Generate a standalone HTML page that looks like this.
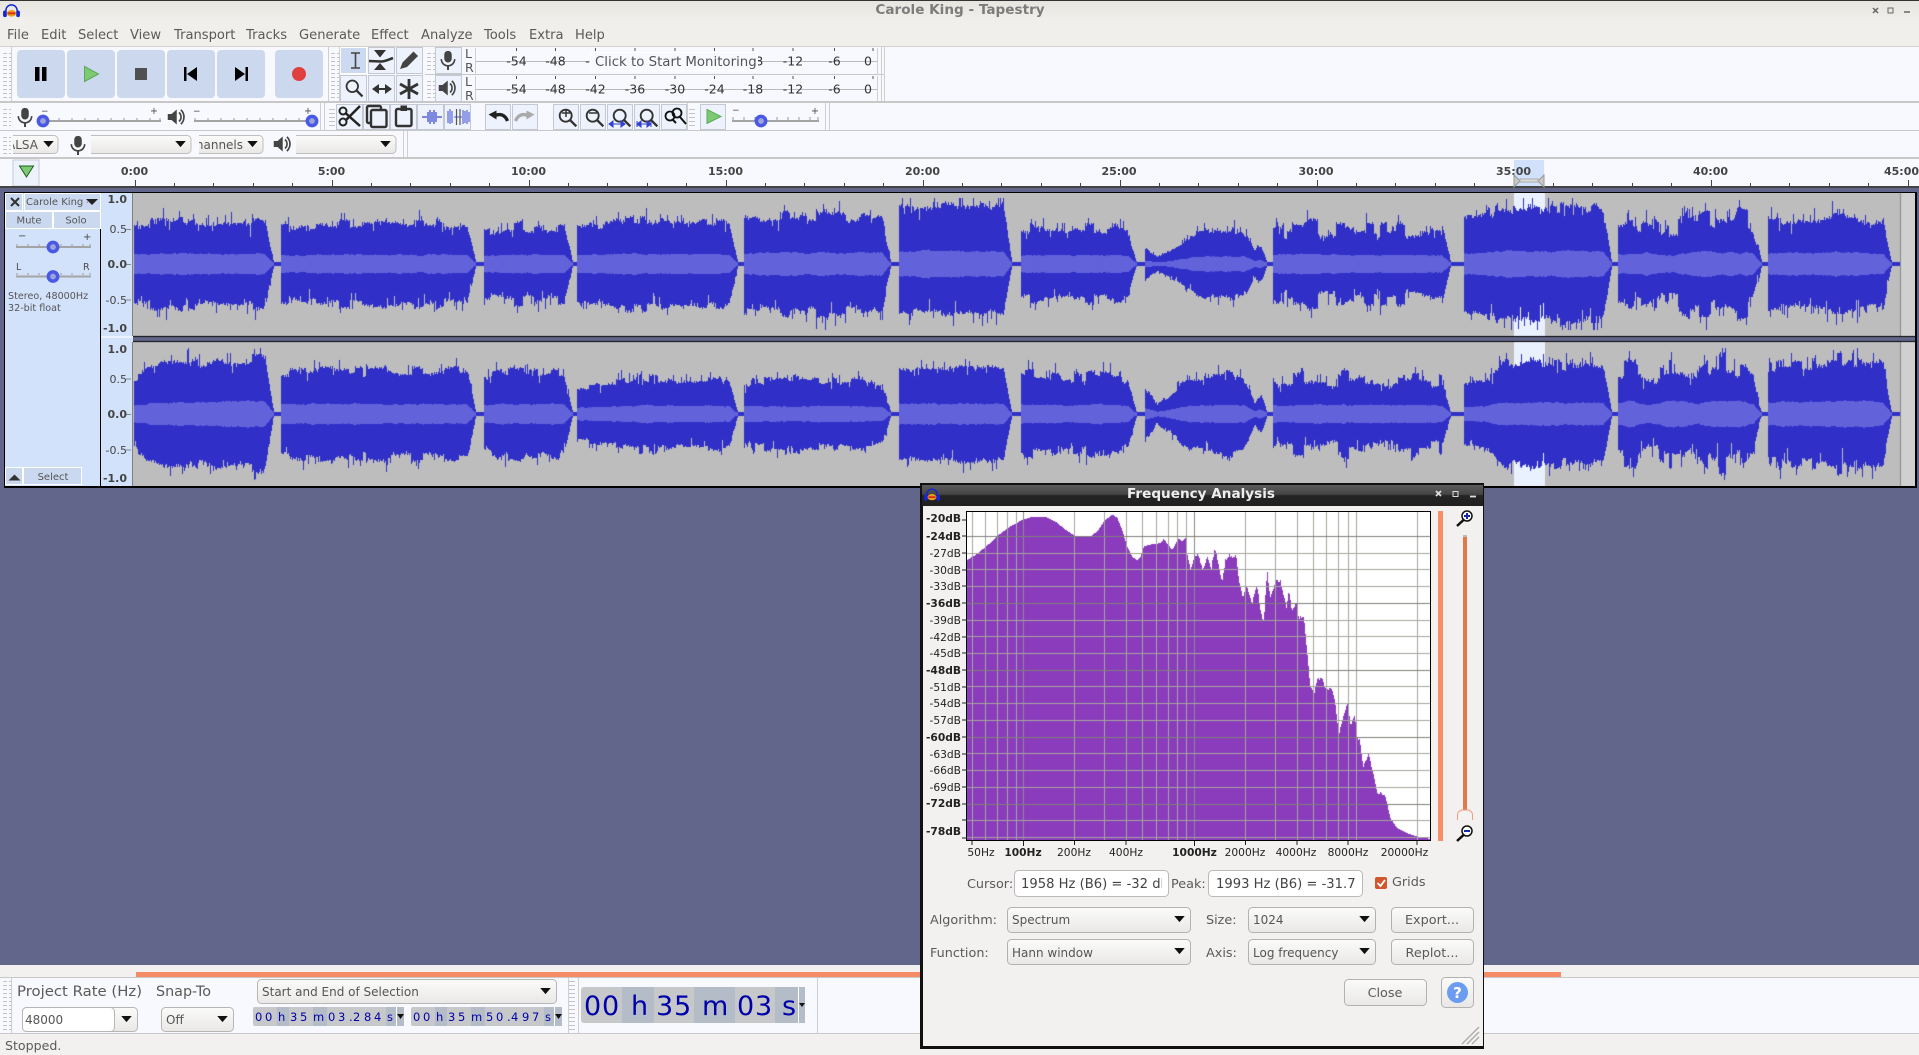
<!DOCTYPE html>
<html lang="en"><head><meta charset="utf-8"><title>Carole King - Tapestry</title>
<style>
html,body{margin:0;padding:0;width:1919px;height:1055px;overflow:hidden;background:#62668a}
canvas,svg.m{position:absolute;display:block}
text{font-family:"DejaVu Sans","Liberation Sans",sans-serif;fill:#4a4a4a;font-size:13.33px}
.g{fill:#5c5a58}.b{font-weight:bold}.r{text-anchor:end}.c{text-anchor:middle}
.ru{font-size:11px;font-weight:bold;fill:#444}
.vr{font-size:11px;text-anchor:end;fill:#444}
.db{font-size:10.67px;text-anchor:end;fill:#222}
.hz{font-size:10.67px;text-anchor:middle;fill:#222}
.me{font-size:12.5px;text-anchor:middle;fill:#333}
.tk{font-size:10px;fill:#555}
.co{font-size:12px;fill:#555}
.bl{fill:#0000a8}
</style></head><body>
<canvas id="w" width="1782" height="294" style="left:133px;top:193px;z-index:1"></canvas>
<svg class="m" width="1919" height="1055" viewBox="0 0 1919 1055" style="left:0;top:0;z-index:2">
<defs>
<linearGradient id="tb" x1="0" y1="0" x2="0" y2="1"><stop offset="0" stop-color="#e6e4df"/><stop offset="1" stop-color="#f1efeb"/></linearGradient>
<linearGradient id="dt" x1="0" y1="0" x2="0" y2="1"><stop offset="0" stop-color="#5c5c5c"/><stop offset=".45" stop-color="#444"/><stop offset=".5" stop-color="#242424"/><stop offset="1" stop-color="#202020"/></linearGradient>
<linearGradient id="bt" x1="0" y1="0" x2="0" y2="1"><stop offset="0" stop-color="#fbfbfa"/><stop offset="1" stop-color="#e9e8e6"/></linearGradient>
<pattern id="gr" width="8" height="4" patternUnits="userSpaceOnUse"><rect x="1" y="1" width="6" height="1" fill="#c4c4c4"/></pattern>
<symbol id="ar" viewBox="0 0 12 8" overflow="visible"><path d="M0 0H12L6 7Z" fill="#111"/></symbol>
<symbol id="mic" viewBox="0 0 24 24"><rect x="7.5" y="1" width="9" height="14" rx="4.5" fill="#444"/><path d="M4 11a8 8 0 0 0 16 0" fill="none" stroke="#444" stroke-width="2"/><path d="M12 19v5" stroke="#444" stroke-width="2.4"/></symbol>
<symbol id="spk" viewBox="0 0 24 24"><path d="M1 8h5l7-6v20l-7-6H1Z" fill="#444"/><path d="M16 6a8 8 0 0 1 0 12M18.500 2.500a13 13 0 0 1 0 19" fill="none" stroke="#444" stroke-width="2.200"/></symbol>
<symbol id="logo" viewBox="0 0 18 16"><path d="M3 10V8a6 6 0 0 1 12 0v2" fill="none" stroke="#1226d8" stroke-width="1.600"/><rect x="0" y="8" width="4" height="7" rx="2" fill="#1226d8"/><rect x="14" y="8" width="4" height="7" rx="2" fill="#1226d8"/><ellipse cx="9" cy="11" rx="5" ry="3.500" fill="#e8a020"/><path d="M5 11h8" stroke="#e02a10" stroke-width="2"/></symbol>
<symbol id="zm" viewBox="0 0 26 26"><circle cx="10.500" cy="10.500" r="6.500" fill="none" stroke="#333" stroke-width="2"/><path d="M15.500 15.500L22 22" stroke="#333" stroke-width="2.600"/></symbol>
<symbol id="kn" viewBox="0 0 12 12"><circle cx="6" cy="6" r="4" fill="#9ea4d8" stroke="#4a58e6" stroke-width="3"/></symbol>
</defs>

<!-- title bar and menu -->
<rect x="0" y="0" width="1919" height="46" fill="#f1efeb"/>
<rect x="0" y="0" width="1919" height="20" fill="url(#tb)"/>
<rect x="0" y="0" width="1919" height="1" fill="#333"/>
<use href="#logo" x="3" y="3" width="17" height="15"/>
<text x="960" y="14" class="b c" style="font-size:13.6px;fill:#7c7c7c">Carole King - Tapestry</text>
<path d="M1873 8l5 5m0-5l-5 5" stroke="#666" stroke-width="1.500"/><rect x="1888" y="8" width="5" height="5" fill="none" stroke="#666"/><path d="M1904 12h6" stroke="#666" stroke-width="1.500"/>
<g>
<text class="g" style="font-size:13.1px" x="7" y="39">File</text><text class="g" style="font-size:13.1px" x="41" y="39">Edit</text><text class="g" style="font-size:13.1px" x="78" y="39">Select</text><text class="g" style="font-size:13.1px" x="130" y="39">View</text><text class="g" style="font-size:13.1px" x="174" y="39">Transport</text><text class="g" style="font-size:13.1px" x="246" y="39">Tracks</text><text class="g" style="font-size:13.1px" x="299" y="39">Generate</text><text class="g" style="font-size:13.1px" x="371" y="39">Effect</text><text class="g" style="font-size:13.1px" x="421" y="39">Analyze</text><text class="g" style="font-size:13.1px" x="484" y="39">Tools</text><text class="g" style="font-size:13.1px" x="529" y="39">Extra</text><text class="g" style="font-size:13.1px" x="575" y="39">Help</text>
</g>

<!-- toolbars -->
<rect x="0" y="46" width="1919" height="112" fill="#f8f9ff"/>
<rect x="0" y="46" width="1919" height="1" fill="#d4d2ce"/>
<rect x="0" y="101" width="1919" height="2" fill="#c8c8c8"/>
<rect x="0" y="130" width="1919" height="1" fill="#c8c8c8"/>
<rect x="0" y="157" width="1919" height="2" fill="#c8c8c8"/>
<rect x="425" y="74" width="460" height="1" fill="#c8c8c8"/>
<g fill="url(#gr)"><rect x="3" y="50" width="8" height="48"/><rect x="331" y="50" width="8" height="48"/><rect x="427" y="50" width="8" height="20"/><rect x="427" y="78" width="8" height="20"/><rect x="3" y="106" width="8" height="22"/><rect x="327" y="106" width="8" height="22"/><rect x="689" y="106" width="8" height="22"/><rect x="3" y="134" width="8" height="22"/></g>
<g fill="#cfcfcf"><rect x="11" y="47" width="1" height="54"/><rect x="328" y="47" width="1" height="54"/><rect x="339" y="47" width="1" height="54"/><rect x="320" y="103" width="1" height="27"/><rect x="324" y="103" width="1" height="27"/><rect x="403" y="131" width="1" height="26"/><rect x="407" y="131" width="1" height="26"/><rect x="881" y="47" width="1" height="54"/><rect x="884" y="47" width="1" height="54"/><rect x="825" y="103" width="1" height="27"/><rect x="829" y="103" width="1" height="27"/><rect x="687" y="103" width="1" height="27"/></g>

<g fill="#cbd8ee"><rect x="17" y="50" width="48" height="48" rx="4"/><rect x="67" y="50" width="48" height="48" rx="4"/><rect x="117" y="50" width="48" height="48" rx="4"/><rect x="167" y="50" width="48" height="48" rx="4"/><rect x="217" y="50" width="48" height="48" rx="4"/><rect x="275" y="50" width="48" height="48" rx="4"/></g>
<rect x="35" y="67" width="4.500" height="14" fill="#000"/><rect x="42" y="67" width="4.500" height="14" fill="#000"/>
<path d="M84.500 66.500L98.500 74L84.500 81.500Z" fill="#7ccb74" stroke="#5ca858"/>
<rect x="135" y="68" width="12" height="12" fill="#505050"/>
<path d="M184 67h2.500v14H184ZM197 67v14l-10-7Z" fill="#000"/>
<path d="M245.500 67h2.500v14h-2.500ZM235 67v14l10-7Z" fill="#000"/>
<circle cx="299" cy="74" r="7" fill="#e04040"/>

<!-- tools -->
<g fill="#eef2fc" stroke="#c4c8d2"><rect x="368.500" y="47.500" width="26" height="26"/><rect x="396.500" y="47.500" width="26" height="26"/><rect x="340.500" y="75.500" width="26" height="26"/><rect x="368.500" y="75.500" width="26" height="26"/><rect x="396.500" y="75.500" width="26" height="26"/><rect x="435.500" y="47.500" width="26" height="26"/><rect x="435.500" y="75.500" width="26" height="26"/></g>
<rect x="340.500" y="47.500" width="26" height="26" fill="#ccdaf1" stroke="#fff"/>
<path d="M351 53h9M351 68h9M355.500 53v15" stroke="#444" stroke-width="1.600" fill="none"/>
<path d="M374 50h12l-6 7.500ZM374 70h12l-6-7Z" fill="#333"/><path d="M369 61l12 .5c4 0 8-2 12-3.500" stroke="#333" stroke-width="2.600" fill="none"/>
<path d="M400 69l2.500-6.500 11-11 4.500 4.500-11 11Z" fill="#444"/>
<use href="#zm" x="343" y="77" width="23" height="23"/>
<path d="M374 89h16" stroke="#333" stroke-width="2"/><path d="M379 84l-7 5 7 5ZM385 84l7 5-7 5Z" fill="#333"/>
<path d="M409 79v20M400 84l18 10M418 84l-18 10" stroke="#333" stroke-width="2.800"/>
<use href="#mic" x="438" y="50" width="20" height="20"/>
<use href="#spk" x="438" y="79" width="18" height="18"/>
<text x="465" y="58" style="font-size:12.500px;fill:#555">L</text><text x="465" y="72" style="font-size:12.500px;fill:#555">R</text>
<text x="465" y="86" style="font-size:12.500px;fill:#555">L</text><text x="465" y="100" style="font-size:12.500px;fill:#555">R</text>

<!-- meters -->
<path d="M475.500 48v26M877.500 48v26M475.500 76v25M877.500 76v25" stroke="#d0d0d0"/>
<path d="M476 61.500h401M476 89.500h401" stroke="#bbb"/>
<path d="M516.500 48v3M555.500 48v3M595.500 48v3M635 48v3M675 48v3M714.500 48v3M753 48v3M793 48v3M834.500 48v3M873 48v3M516.500 76v3M555.500 76v3M595.500 76v3M635 76v3M675 76v3M714.500 76v3M753 76v3M793 76v3M834.500 76v3M873 76v3" stroke="#555"/>
<g><text class="me" x="516.500" y="65.500">-54</text><text class="me" x="555.500" y="65.500">-48</text><text class="me" x="595.500" y="65.500">-42</text><text class="me" x="753" y="65.500">-18</text><text class="me" x="793" y="65.500">-12</text><text class="me" x="834.500" y="65.500">-6</text><text class="me" x="868" y="65.500">0</text>
<text class="me" x="516.500" y="93.500">-54</text><text class="me" x="555.500" y="93.500">-48</text><text class="me" x="595.500" y="93.500">-42</text><text class="me" x="635" y="93.500">-36</text><text class="me" x="675" y="93.500">-30</text><text class="me" x="714.500" y="93.500">-24</text><text class="me" x="753" y="93.500">-18</text><text class="me" x="793" y="93.500">-12</text><text class="me" x="834.500" y="93.500">-6</text><text class="me" x="868" y="93.500">0</text></g>
<rect x="590.500" y="52.500" width="167" height="18" fill="#f8f9ff" stroke="#fff"/>
<text x="595" y="66" style="font-size:13.33px;fill:#555">Click to Start Monitoring</text>

<!-- row 2 -->
<use href="#mic" x="15" y="107" width="20" height="20"/>
<text x="41" y="114" style="font-size:9px">−</text><text x="150" y="114" style="font-size:9.500px">+</text>
<rect x="40" y="120" width="121" height="2" fill="#a4a4a4"/><path d="M46 118v2M59 118v2M72 118v2M85 118v2M98 118v2M111 118v2M124 118v2M137 118v2M150 118v2M160 118v2M195 118v2M208 118v2M221 118v2M234 118v2M247 118v2M260 118v2M273 118v2M286 118v2M299 118v2M314 118v2" stroke="#999"/>
<use href="#kn" x="36" y="114" width="14" height="14"/>
<use href="#spk" x="167" y="108" width="18" height="18"/>
<text x="193" y="114" style="font-size:9px">−</text><text x="304" y="114" style="font-size:9.500px">+</text>
<rect x="194" y="120" width="121" height="2" fill="#a4a4a4"/><use href="#kn" x="305" y="114" width="14" height="14"/>

<g fill="#eef2fc" stroke="#c4c8d2"><rect x="336.500" y="104.500" width="26" height="25"/><rect x="363.500" y="104.500" width="26" height="25"/><rect x="390.500" y="104.500" width="26" height="25"/><rect x="417.500" y="104.500" width="26" height="25"/><rect x="444.500" y="104.500" width="26" height="25"/><rect x="485.500" y="104.500" width="25" height="25"/><rect x="512.500" y="104.500" width="25" height="25"/><rect x="553.500" y="104.500" width="25" height="25"/><rect x="580.500" y="104.500" width="25" height="25"/><rect x="607.500" y="104.500" width="25" height="25"/><rect x="634.500" y="104.500" width="25" height="25"/><rect x="661.500" y="104.500" width="25" height="25"/><rect x="700.500" y="104.500" width="25" height="25"/></g>
<path d="M346 113.500L360 126M346 120L360 106" stroke="#222" stroke-width="2.500"/><circle cx="343" cy="111" r="3.500" fill="#eef2fc" stroke="#222" stroke-width="2"/><circle cx="343" cy="122" r="3.500" fill="#eef2fc" stroke="#222" stroke-width="2"/>
<rect x="367" y="106" width="14" height="17" rx="1.500" fill="none" stroke="#333" stroke-width="2.400"/><rect x="371" y="110" width="15.500" height="17" rx="1.500" fill="#eef2fc" stroke="#333" stroke-width="2.400"/>
<rect x="396" y="109" width="15.500" height="17" rx="1.500" fill="none" stroke="#333" stroke-width="2.400"/><rect x="400.500" y="105.500" width="6.500" height="5.500" fill="#333"/>
<path d="M422 117h5M437 117h5M428 112v10M430 110v14M432 112v10M434 110v14M436 112v10" stroke="#3344cc" stroke-width="1.200"/>
<path d="M448 111v12M450 109v15M452 111v12M454 117h8M463 110v14M465 111v12M467 110v14M469 112v10" stroke="#4a5ad6" stroke-width="1.100"/><path d="M456.500 109v16M460 109v16" stroke="#555" stroke-width="1.200"/>
<path d="M488.500 114.500l8-4v9Z" fill="#222"/><path d="M495 115.500c5-2 10-1 12.500 5.500" fill="none" stroke="#222" stroke-width="3.400"/>
<path d="M534.500 114.500l-8-4v9Z" fill="#aaa"/><path d="M528 115.500c-5-2-10-1-12.500 5.500" fill="none" stroke="#aaa" stroke-width="3.400"/>
<use href="#zm" x="556" y="106" width="24" height="24"/><path d="M562 113h8M566 109v8" stroke="#333" stroke-width="1.500"/>
<use href="#zm" x="583" y="106" width="24" height="24"/><path d="M589 113h8" stroke="#333" stroke-width="1.500"/>
<use href="#zm" x="610" y="106" width="24" height="24"/><path d="M610 124h14M613 121l-4 3 4 3ZM621 121l4 3-4 3Z" stroke="#3340d0" fill="#3340d0"/>
<use href="#zm" x="637" y="106" width="24" height="24"/><path d="M637 124h14M637 121v6M651 121v6M637 124l4-3v6ZM651 124l-4-3v6Z" stroke="#3340d0" fill="#3340d0"/>
<circle cx="670" cy="116" r="4.500" fill="none" stroke="#111" stroke-width="1.800"/><circle cx="677" cy="113" r="4.500" fill="none" stroke="#111" stroke-width="1.800"/><path d="M673 120l3 3M680 117l6 7" stroke="#111" stroke-width="2"/>
<path d="M707 109.500l14 7-14 7Z" fill="#7ccb74" stroke="#5ca858"/>
<text x="732" y="113" style="font-size:9px">−</text><text x="811" y="114" style="font-size:9.500px">+</text>
<rect x="732" y="120" width="87" height="2" fill="#a4a4a4"/><path d="M733 117v3M744 117v3M755 117v3M766 117v3M777 117v3M788 117v3M799 117v3M810 117v3M818 117v3" stroke="#999"/>
<use href="#kn" x="754" y="114" width="14" height="14"/>

<!-- row 3 -->
<path d="M13 135.500h41a4 4 0 0 1 4 4v10a4 4 0 0 1-4 4H13" fill="url(#bt)" stroke="#c0bebc"/>
<svg x="13" y="135" width="30" height="19"><text x="-6" y="14" class="co">ALSA</text></svg>
<use href="#ar" x="43" y="141" width="11" height="7"/>
<use href="#mic" x="68" y="135" width="20" height="20"/>
<path d="M91 135.500h96a4 4 0 0 1 4 4v10a4 4 0 0 1-4 4H91" fill="url(#bt)" stroke="#c0bebc"/>
<use href="#ar" x="175" y="141" width="11" height="7"/>
<path d="M199 135.500h60a4 4 0 0 1 4 4v10a4 4 0 0 1-4 4H199" fill="url(#bt)" stroke="#c0bebc"/>
<svg x="199" y="135" width="46" height="19"><text x="-11.500" y="14" class="co">Channels</text></svg>
<use href="#ar" x="247" y="141" width="11" height="7"/>
<use href="#spk" x="273" y="135" width="18" height="18"/>
<path d="M296 135.500h96a4 4 0 0 1 4 4v10a4 4 0 0 1-4 4H296" fill="url(#bt)" stroke="#c0bebc"/>
<use href="#ar" x="380" y="141" width="11" height="7"/>

<!-- ruler -->
<rect x="0" y="159" width="1919" height="27" fill="#f8f9ff"/>
<rect x="1514" y="160" width="30" height="26" fill="#d2e1fb"/>
<rect x="13" y="160" width="26" height="26" fill="#eef2fc" stroke="#c6c9d2"/>
<path d="M19.500 166h14l-7 11Z" fill="#7ccb74" stroke="#1c5c1c"/>
<rect x="0" y="186" width="1919" height="2" fill="#444"/>
<g id="rt"></g>
<g class="ru"><text class="ru c" x="134.500" y="175">0:00</text><text class="ru c" x="331.500" y="175">5:00</text><text class="ru c" x="528.500" y="175">10:00</text><text class="ru c" x="725.500" y="175">15:00</text><text class="ru c" x="922.500" y="175">20:00</text><text class="ru c" x="1119" y="175">25:00</text><text class="ru c" x="1316" y="175">30:00</text><text class="ru c" x="1513.500" y="175">35:00</text><text class="ru c" x="1710.500" y="175">40:00</text><text class="ru c" x="1901.500" y="175">45:00</text></g>
<path d="M1514 175v12l6-6ZM1544 175v12l-6-6Z" fill="#c8c8c8" stroke="#999"/><path d="M1520 179h18v3h-18Z" fill="#ddd" stroke="#aaa"/>

<!-- track panel -->
<rect x="4" y="192" width="129" height="296" fill="#000"/>
<rect x="5" y="193" width="95" height="293" fill="#d3e2fb"/>
<rect x="101" y="193" width="31" height="143" fill="#d3e2fb"/>
<rect x="101" y="342" width="31" height="144" fill="#d3e2fb"/>
<rect x="101" y="336" width="32" height="2" fill="#eaf1ff"/><rect x="101" y="338" width="32" height="4" fill="#d3e2fb"/>
<rect x="132" y="193" width="1" height="143" fill="#808080"/><rect x="132" y="342" width="1" height="144" fill="#808080"/>
<path d="M126 229.500h5M126 264.500h5M126 300h5M126 379h5M126 414.500h5M126 450h5" stroke="#888"/>
<g fill="#cbd9f0" stroke="#fff"><rect x="5.500" y="193.500" width="17" height="17"/><rect x="24.500" y="193.500" width="76" height="17"/><rect x="5.500" y="211.500" width="47" height="17"/><rect x="53.500" y="211.500" width="47" height="17"/><rect x="5.500" y="467.500" width="17" height="17"/><rect x="23.500" y="467.500" width="58" height="17"/></g>
<path d="M11 198l8 8m0-8l-8 8" stroke="#333" stroke-width="2"/>
<svg x="26" y="193" width="62" height="17"><text class="tk" x="0" y="12">Carole King - Tapestry</text></svg>
<path d="M86 199h12l-6 6Z" fill="#222"/>
<text class="tk c" x="29" y="223.500">Mute</text><text class="tk c" x="76" y="223.500">Solo</text>
<text x="18" y="239" style="font-size:10px">−</text><text x="83" y="240" style="font-size:10px">+</text>
<text x="16" y="270" style="font-size:9.500px">L</text><text x="83" y="270" style="font-size:9.500px">R</text>
<rect x="16" y="246" width="75" height="2" fill="#a4a4a4"/><rect x="16" y="275.500" width="75" height="2" fill="#a4a4a4"/>
<path d="M17 244v2M28 244v2M39 244v2M61 244v2M72 244v2M83 244v2M90 244v2M17 273v2M28 273v2M39 273v2M61 273v2M72 273v2M83 273v2M90 273v2" stroke="#999"/>
<use href="#kn" x="46" y="240" width="14" height="14"/><use href="#kn" x="46" y="269.500" width="14" height="14"/>
<text x="8" y="299" style="font-size:9.600px;fill:#555">Stereo, 48000Hz</text><text x="8" y="311" style="font-size:9.600px;fill:#555">32-bit float</text>
<path d="M8.500 480.500l6-6 6 6Z" fill="#333"/>
<text class="tk c" x="53" y="480">Select</text>
<g><text class="vr b" x="127" y="203">1.0</text><text class="vr" x="127" y="233">0.5</text><text class="vr b" x="127" y="268">0.0</text><text class="vr" x="127" y="304">-0.5</text><text class="vr b" x="127" y="332">-1.0</text>
<text class="vr b" x="127" y="353">1.0</text><text class="vr" x="127" y="383">0.5</text><text class="vr b" x="127" y="418">0.0</text><text class="vr" x="127" y="454">-0.5</text><text class="vr b" x="127" y="482">-1.0</text></g>
<rect x="1915" y="192" width="2" height="296" fill="#000"/><rect x="133" y="192" width="1784" height="1" fill="#000"/><rect x="133" y="486" width="1784" height="2" fill="#000"/>

<!-- bottom -->
<rect x="0" y="965" width="1919" height="12" fill="#f2f1ef"/>
<rect x="136" y="972" width="1425" height="5" fill="#f68c66"/>
<rect x="0" y="977" width="1919" height="56" fill="#f8f9ff"/>
<rect x="0" y="977" width="1919" height="1" fill="#c8c8c8"/><rect x="0" y="1033" width="1919" height="1" fill="#c8c8c8"/>
<rect x="0" y="1034" width="1919" height="21" fill="#f2f1ef"/>
<rect x="3" y="980" width="8" height="50" fill="url(#gr)"/><rect x="11" y="978" width="1" height="55" fill="#cfcfcf"/>
<rect x="569" y="980" width="8" height="50" fill="url(#gr)"/><rect x="568" y="978" width="1" height="55" fill="#cfcfcf"/><rect x="578" y="978" width="1" height="55" fill="#cfcfcf"/><rect x="817" y="978" width="1" height="55" fill="#cfcfcf"/>
<text class="g" x="17" y="996" style="font-size:14.600px" textLength="125" lengthAdjust="spacingAndGlyphs">Project Rate (Hz)</text><text class="g" x="156" y="996" style="font-size:14.600px" textLength="55" lengthAdjust="spacingAndGlyphs">Snap-To</text>
<rect x="22.500" y="1007.500" width="115" height="24" rx="4" fill="url(#bt)" stroke="#b8b6b4"/><rect x="22.500" y="1007.500" width="92" height="24" rx="4" fill="#fff" stroke="#b8b6b4"/>
<text class="co" x="25" y="1024">48000</text><use href="#ar" x="121" y="1016" width="11" height="7"/>
<rect x="161.500" y="1007.500" width="72" height="24" rx="4" fill="url(#bt)" stroke="#b8b6b4"/><text class="co" x="166" y="1024">Off</text><use href="#ar" x="217" y="1016" width="11" height="7"/>
<rect x="257.500" y="979.500" width="299" height="24" rx="4" fill="url(#bt)" stroke="#b8b6b4"/><text class="co" x="262" y="996">Start and End of Selection</text><use href="#ar" x="540" y="988" width="11" height="7"/>

<rect x="253" y="1007" width="151" height="19" rx="2" fill="#c6c8ca"/>
<g fill="#b4bcc8"><rect x="277" y="1007" width="12" height="19"/><rect x="313" y="1007" width="14" height="19"/><rect x="386" y="1007" width="18" height="19"/></g>
<text class="bl" style="font-size:11.500px" x="255 265 278 290 300 313 328 338 349 353 364 374 387" y="1021">00h35m03.284s</text>
<path d="M397 1014h7l-3.500 5Z" fill="#111"/><rect x="396" y="1007" width="1" height="19" fill="#fff"/>
<rect x="411" y="1007" width="151" height="19" rx="2" fill="#c6c8ca"/>
<g fill="#b4bcc8"><rect x="435" y="1007" width="12" height="19"/><rect x="471" y="1007" width="14" height="19"/><rect x="544" y="1007" width="18" height="19"/></g>
<text class="bl" style="font-size:11.500px" x="413 423 436 448 458 471 486 496 507 511 522 532 545" y="1021">00h35m50.497s</text>
<path d="M555 1014h7l-3.500 5Z" fill="#111"/><rect x="554" y="1007" width="1" height="19" fill="#fff"/>

<rect x="581" y="987" width="224" height="36" rx="3" fill="#c6c8ca"/>
<g fill="#b4bcc8"><rect x="622" y="987" width="32" height="36"/><rect x="694" y="987" width="41" height="36"/><rect x="775" y="987" width="30" height="36"/></g>
<text class="bl" style="font-size:27px" x="584 602 631 656 674 702 737 755 782" y="1015">00h35m03s</text>
<rect x="798" y="987" width="1" height="36" fill="#fff"/><path d="M799 1003h6l-3 4Z" fill="#111"/>
<text class="g" x="5" y="1050" style="font-size:12.600px">Stopped.</text>

<!-- dialog -->
<rect x="920" y="483" width="564" height="566" fill="#111"/>
<rect x="923" y="506" width="560" height="540" fill="#f2f1ef"/>
<rect x="922" y="485" width="561" height="21" fill="url(#dt)"/>
<use href="#logo" x="924" y="487" width="16" height="15"/>
<text x="1201" y="498" class="c b" style="font-size:13.600px;fill:#eee">Frequency Analysis</text>
<path d="M1436 491l5 5m0-5l-5 5" stroke="#ddd" stroke-width="1.800"/><rect x="1453" y="491.500" width="5" height="5" fill="none" stroke="#ddd"/><path d="M1470 496.500h6" stroke="#ddd" stroke-width="1.800"/>
<rect x="966.500" y="511.500" width="464" height="329" fill="#fff" stroke="#000"/>
<path d="M962 520h5M962 536h5M962 553h5M962 570h5M962 586h5M962 603h5M962 620h5M962 637h5M962 653h5M962 670h5M962 687h5M962 703h5M962 720h5M962 737h5M962 754h5M962 770h5M962 787h5M962 804h5M962 820h5M962 838h5" stroke="#222"/>
<path d="M972 841v4M1023.500 841v5M1074.500 841v4M1126 841v4M1194.500 841v5M1245.500 841v4M1297 841v4M1348 841v4M1417 841v4" stroke="#222"/>
<text class="db b" x="961" y="522">-20dB</text><text class="db b" x="961" y="540">-24dB</text><text class="db" x="961" y="557">-27dB</text><text class="db" x="961" y="574">-30dB</text><text class="db" x="961" y="590">-33dB</text><text class="db b" x="961" y="607">-36dB</text><text class="db" x="961" y="624">-39dB</text><text class="db" x="961" y="641">-42dB</text><text class="db" x="961" y="657">-45dB</text><text class="db b" x="961" y="674">-48dB</text><text class="db" x="961" y="691">-51dB</text><text class="db" x="961" y="707">-54dB</text><text class="db" x="961" y="724">-57dB</text><text class="db b" x="961" y="741">-60dB</text><text class="db" x="961" y="758">-63dB</text><text class="db" x="961" y="774">-66dB</text><text class="db" x="961" y="791">-69dB</text><text class="db b" x="961" y="807">-72dB</text><text class="db b" x="961" y="835">-78dB</text>
<text class="hz" x="981" y="856">50Hz</text><text class="hz b" x="1023" y="856">100Hz</text><text class="hz" x="1074" y="856">200Hz</text><text class="hz" x="1126" y="856">400Hz</text><text class="hz b" x="1194.500" y="856">1000Hz</text><text class="hz" x="1245" y="856">2000Hz</text><text class="hz" x="1296" y="856">4000Hz</text><text class="hz" x="1348" y="856">8000Hz</text><text class="hz" x="1404.500" y="856">20000Hz</text>
<rect x="1438" y="511" width="5" height="330" fill="#f48f68"/>
<rect x="1463" y="535" width="4" height="276" fill="#e2784e"/><rect x="1463" y="535" width="4" height="2" fill="#bbb"/>
<path d="M1457.500 820v-5a5 5 0 0 1 5-5h5a5 5 0 0 1 5 5v5" fill="#f4f3f1" stroke="#e8a080"/>
<circle cx="1467" cy="516" r="5" fill="#fff" stroke="#111" stroke-width="1.500"/><path d="M1463.500 520l-6.500 6" stroke="#111" stroke-width="2.500"/><path d="M1464 516h6M1467 513v6" stroke="#1428b0" stroke-width="2"/>
<circle cx="1467" cy="831" r="5" fill="#fff" stroke="#111" stroke-width="1.500"/><path d="M1463.500 835l-6.500 6" stroke="#111" stroke-width="2.500"/><path d="M1464 831h6" stroke="#1428b0" stroke-width="2"/>

<text class="g" x="967" y="888" style="font-size:12.800px">Cursor:</text>
<rect x="1014.500" y="870.500" width="154" height="26" rx="4" fill="#fff" stroke="#bcbab8"/>
<svg x="1016" y="871" width="146" height="25"><text x="5" y="17" style="font-size:13.15px;fill:#444">1958 Hz (B6) = -32 dB</text></svg>
<text class="g" x="1171" y="888" style="font-size:12.800px">Peak:</text>
<rect x="1208.500" y="870.500" width="154" height="26" rx="4" fill="#fff" stroke="#bcbab8"/>
<svg x="1210" y="871" width="146" height="25"><text x="6" y="17" style="font-size:13.15px;fill:#444">1993 Hz (B6) = -31.7 dB</text></svg>
<rect x="1375" y="877" width="12" height="12" rx="2" fill="#d0582e"/><path d="M1377.500 883l3 3 4.500-6" stroke="#fff" stroke-width="1.800" fill="none"/>
<text class="g" x="1392" y="886" style="font-size:12.800px">Grids</text>

<text class="g" x="930" y="924" style="font-size:12.800px">Algorithm:</text>
<text class="g" x="930" y="957" style="font-size:12.800px">Function:</text>
<text class="g" x="1206" y="924" style="font-size:12.800px">Size:</text>
<text class="g" x="1206" y="957" style="font-size:12.800px">Axis:</text>
<g fill="url(#bt)" stroke="#b4b2b0"><rect x="1007.500" y="907.500" width="183" height="25" rx="4"/><rect x="1007.500" y="939.500" width="183" height="25" rx="4"/><rect x="1248.500" y="907.500" width="127" height="25" rx="4"/><rect x="1248.500" y="939.500" width="127" height="25" rx="4"/><rect x="1391.500" y="907.500" width="82" height="25" rx="4"/><rect x="1391.500" y="939.500" width="82" height="25" rx="4"/><rect x="1344.500" y="979.500" width="82" height="26" rx="4"/><rect x="1441.500" y="977.500" width="32" height="30" rx="4"/></g>
<text class="co" x="1012" y="924">Spectrum</text><text class="co" x="1012" y="957">Hann window</text><text class="co" x="1253" y="924">1024</text><text class="co" x="1253" y="957">Log frequency</text>
<use href="#ar" x="1174" y="916" width="11" height="7"/><use href="#ar" x="1174" y="948" width="11" height="7"/><use href="#ar" x="1359" y="916" width="11" height="7"/><use href="#ar" x="1359" y="948" width="11" height="7"/>
<text class="g c" x="1432" y="924" style="font-size:12.800px">Export...</text><text class="g c" x="1432" y="957" style="font-size:12.800px">Replot...</text><text class="g c" x="1385" y="997" style="font-size:12.800px">Close</text>
<circle cx="1457.500" cy="992.500" r="10.500" fill="#6b9cf0"/><text class="c b" x="1457.500" y="998" style="font-size:15px;fill:#fff">?</text>
<path d="M1462 1044l17-17M1467 1044l12-12M1472 1044l7-7" stroke="#aaa" stroke-width="1.300"/>
</svg>
<canvas id="s" width="463" height="328" style="left:967px;top:512px;z-index:3"></canvas>
<script>
(function(){
var seed=12345;function R(){seed|=0;seed=seed+0x6D2B79F5|0;var t=Math.imul(seed^seed>>>15,1|seed);t=t+Math.imul(t^t>>>7,61|t)^t;return((t^t>>>14)>>>0)/4294967296;}
/* ruler ticks */
var g=document.getElementById('rt'),p='';
for(var i=0;i<=46;i++){var x=Math.round(134.5+i*39.4)+.5;var mj=i%5==0;p+='M'+x+' '+(mj?180:183)+'V186';}
g.innerHTML='<path d="'+p+'" stroke="#444" fill="none"/>';
/* waves: [start,end,env ch1,env ch2,roughness] */
var c=document.getElementById('w').getContext('2d'),O=133;
var songs=[
[134,274,[.72,.76,.78,.74,.76,.78,.74],[.64,.88,.88,.92,.94,1,.92],.16],
[281,476,[.68,.72,.74,.72,.74,.72],[.72,.8,.78,.78,.8,.76],.18],
[484,573,[.62,.72,.7,.68,.7],[.72,.8,.76,.76,.78],.22],
[577,738,[.66,.76,.78,.76,.78,.72],[.48,.6,.64,.62,.64,.56],.18],
[744,891,[.78,.88,.9,.86,.84,.8],[.58,.64,.62,.6,.62,.56],.18],
[899,1012,[.94,1,1,1,.98,1],[.74,.8,.78,.8,.8,.76],.08],
[1021,1137,[.66,.68,.64,.66,.68,.66,.56],[.7,.72,.72,.7,.74,.7,.56],.22],
[1145,1267,[.28,.14,.22,.38,.5,.6,.54,.58,.6,.22,.66],[.46,.17,.34,.56,.68,.68,.66,.72,.66,.22,.7],.2],
[1273,1451,[.7,.74,.72,.72,.74,.7],[.66,.72,.72,.7,.72,.66],.36],
[1464,1612,[.8,.94,1,1,1,1,1,1],[.58,.62,.9,.9,.9,.82,.9,.88],.14],
[1618,1762,[.8,.84,.92,.66,.72,.92,1,.84,.96,.88,.58],[.86,.96,.66,.96,1,.74,1,1,.92,.58],.34],
[1768,1892,[.78,.88,.84,.84,.92,.88,.84,.66],[.88,.94,.92,.98,.98,.94,.9,.78],.22]];
function song(x){for(var i=0;i<songs.length;i++){if(x>=songs[i][0]&&x<songs[i][1])return songs[i];}return null;}
function amp(s,x,ch){var a=s[2+ch],t=(x-s[0])/(s[1]-s[0])*(a.length-1),k=Math.floor(t),v=a[k]+(a[Math.min(k+1,a.length-1)]-a[k])*(t-k);var e=Math.min(1,(s[1]-x)/9,(x-s[0]+2)/2);return v*Math.max(.08,e);}
c.fillStyle='#bdbdbd';c.fillRect(0,0,1782,294);
c.fillStyle='#000';c.fillRect(0,143,1782,1);c.fillRect(0,148,1782,1);
c.fillStyle='#62668a';c.fillRect(0,144,1782,4);
function chan(ch,cy,y0,y1){
 c.fillStyle='#e9f0fe';c.fillRect(1514-O,y0,31,y1-y0);
 c.fillStyle='#d0d0d0';c.fillRect(1900-O,y0,15,y1-y0);
 c.fillStyle='#888';c.fillRect(1900-O,y0,1,y1-y0);
 var bL=0,bv=0,l3=0;
 for(var x=134;x<1900;x++){
  var s=song(x),t,b,r,a=0,H=64.5,X=x-O;
  l3=.85*l3+.15*(R()-.5);
  if(--bL<=0){bL=3+Math.floor(R()*9);bv=R();}
  if(!s){t=b=.032;r=.02;}
  else{
   a=amp(s,x,ch);
   var h=1-s[4]*bv*1.1-.05*R();
   var h1=h-.05*R()+(R()<.14?R()*.22:0)-(R()<.05?R()*.22:0);
   var h2=h-.05*R()+(R()<.14?R()*.22:0)-(R()<.05?R()*.22:0);
   t=a*h1;b=a*h2;
   if(ch==0&&s[0]==899)b*=.84;
   r=Math.max(.03,a*(.2+.12*l3));
  }
  t=Math.min(1.03,t);b=Math.min(1.03,b);
  var yt=Math.round(cy-t*H),yb=Math.round(cy+b*H);
  c.fillStyle='#3030c8';c.fillRect(X,yt,1,yb-yt);
  var rr=Math.round(r*H);if(s){c.fillStyle='#6262da';c.fillRect(X,cy-rr,1,2*rr);}
 }
}
chan(0,264-193,0,143);chan(1,414-193,149,293);
/* spectrum */
var z4=[[155,255],[180,240],[215,212],[250,180],[280,157],[320,135],[345,127],[395,127],[420,140],[445,160],[470,178],[490,187],[520,187],[545,170],[565,140],[590,118],[605,128],[620,165],[635,215],[650,245],[665,255],[675,245],[685,215],[710,207],[735,205],[745,192],[770,225],[790,190],[800,200],[810,188],[816,240],[826,285],[840,240],[850,240],[862,290],[875,245],[890,290]];
var z7=[[0,290],[10,285],[18,248],[30,290],[43,218],[55,275],[65,322],[75,255],[87,238],[95,250],[107,238],[115,310],[128,370],[135,328],[145,355],[155,385],[170,330],[180,410],[190,440],[200,285],[210,370],[225,318],[240,320],[258,400],[265,345],[275,410],[290,378],[295,430],[310,420],[320,530],[330,635],[342,655],[350,612],[365,610],[375,640],[395,645],[405,690],[415,780],[430,720],[443,680],[450,750],[463,720],[470,790],[478,795],[488,875],[505,835],[515,885],[530,950],[555,965],[570,1030],[590,1060],[620,1075],[650,1085],[690,1092]];
var P=[];z4.forEach(function(q){P.push([915+q[0]/3,475+q[1]/3]);});z7.forEach(function(q){P.push([1200+q[0]/3,475+q[1]/3]);});
var d=document.getElementById('s').getContext('2d');
d.fillStyle='#fff';d.fillRect(0,0,463,328);
for(var x=967;x<1430;x++){var j=0;while(j<P.length-2&&P[j+1][0]<x)j++;var a=P[j],b=P[j+1];var t=Math.max(0,Math.min(1,(x-a[0])/(b[0]-a[0])));var y=a[1]+(b[1]-a[1])*t;
 if(x>1190&&x<1385)y+=(R()-.5)*3;
 y=Math.round(y);d.fillStyle='#8a3cbc';d.fillRect(x-967,y-512,1,840-y);}
d.fillStyle='#a888cc';d.fillRect(0,325,463,1);
var vx=[972,985,997,1007,1016,1023,1074,1104,1126,1142,1156,1168,1177,1186,1194,1245,1275,1297,1313,1326,1338,1348,1356,1417];
var dk={1023:1,1194:1};
vx.forEach(function(x){d.fillStyle=dk[x]?'#8a8a8a':'#a6a69e';d.fillRect(x-967,0,1,328);});
for(var i=0;i<=18;i++){var y=Math.round(536+i*16.72);var m=i%4==0;d.fillStyle=m?'#80807a':'#a6a69e';d.fillRect(0,y-512,463,1);}
})();
</script>
</body></html>
